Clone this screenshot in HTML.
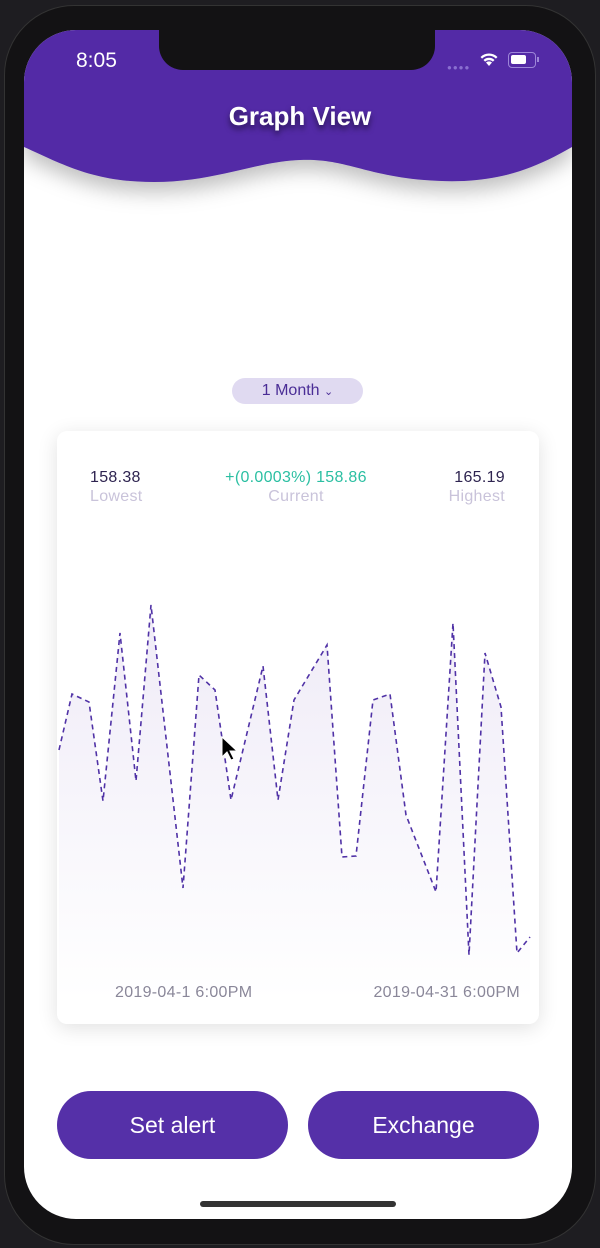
<!DOCTYPE html>
<html><head><meta charset="utf-8"><style>
*{margin:0;padding:0;box-sizing:border-box}
body{width:600px;height:1248px;background:#1e1d21;position:relative;overflow:hidden;font-family:"Liberation Sans",sans-serif}
.frame{position:absolute;left:4px;top:5px;width:592px;height:1240px;border-radius:70px;background:#131214;border:1px solid #333}
.screen{position:absolute;left:24px;top:30px;width:548px;height:1189px;border-radius:52px;background:#fff;overflow:hidden}
.notch{position:absolute;left:159px;top:28px;width:276px;height:42px;background:#131214;border-radius:0 0 24px 24px}
.t{position:absolute;white-space:nowrap}
.btn{position:absolute;top:1091px;height:68px;width:231px;border-radius:34px;background:#5530a8;color:#fff;font-size:23px;text-align:center;line-height:68px}
.v{font-size:16px;letter-spacing:0.3px}
</style></head><body>
<div class="frame"></div>
<div class="screen">
<svg width="548" height="240" style="position:absolute;left:0;top:0">
<defs><filter id="s" x="-10%" y="-10%" width="120%" height="150%"><feDropShadow dx="0" dy="10" stdDeviation="10" flood-color="#000" flood-opacity="0.25"/></filter></defs>
<path d="M0 0H548V117C500 145 460 155 400 150C340 145 320 128 276 130C230 132 190 152 130 152C70 152 40 135 0 117Z" fill="#522ca6" filter="url(#s)"/>
</svg>
</div>
<div class="notch"></div>
<div class="t" style="left:76px;top:49px;color:#fff;font-size:21px">8:05</div>
<div class="t" style="left:447px;top:63px;color:#8a6fd0;font-size:8px;letter-spacing:1px">●●●●</div>
<svg style="position:absolute;left:479px;top:51px" width="20" height="16" viewBox="0 0 20 16"><path d="M10 15L7 11.5a4.5 4.5 0 016 0zM4.5 9a8 8 0 0111 0l-1.6 1.6a5.8 5.8 0 00-7.8 0zM1.5 6a12 12 0 0117 0l-1.6 1.6a9.8 9.8 0 00-13.8 0z" fill="#fff"/></svg>
<div style="position:absolute;left:508px;top:52px;width:28px;height:16px;border:1.5px solid #9d86d8;border-radius:4px"><div style="margin:2px;width:15px;height:9px;background:#fff;border-radius:2px"></div></div>
<div style="position:absolute;left:537px;top:57px;width:2px;height:5px;background:#9d86d8"></div>
<div class="t" style="left:0;width:600px;text-align:center;top:101px;color:#fff;font-size:26px;font-weight:bold;text-shadow:0 4px 6px rgba(0,0,0,.5)">Graph View</div>
<div style="position:absolute;left:232px;top:378px;width:131px;height:26px;border-radius:13px;background:#e0daf1;color:#4a2d96;font-size:16px;text-align:center;line-height:26px">1 Month <span style="font-size:11px">&#8964;</span></div>
<div style="position:absolute;left:57px;top:431px;width:482px;height:593px;border-radius:10px;background:#fff;box-shadow:0 4px 20px rgba(0,0,0,.12)"></div>
<div class="t v" style="left:90px;top:469px;color:#2e2450">158.38</div>
<div class="t v" style="left:90px;top:488px;color:#c9c3da">Lowest</div>
<div class="t v" style="left:0;width:592px;text-align:center;top:469px;color:#2bbfa2">+(0.0003%) 158.86</div>
<div class="t v" style="left:0;width:592px;text-align:center;top:488px;color:#c9c3da">Current</div>
<div class="t v" style="right:95px;top:469px;color:#2e2450">165.19</div>
<div class="t v" style="right:95px;top:488px;color:#c9c3da">Highest</div>
<svg style="position:absolute;left:0;top:0" width="600" height="1248">
<defs><linearGradient id="g" x1="0" y1="0" x2="0" y2="1"><stop offset="0" stop-color="#efebf7"/><stop offset="1" stop-color="#fff"/></linearGradient></defs>
<path d="M59 750L72 694L89 702L103 801L120 633L136 781L151 605L183 888L199 675L215 690L231 800L263 666L278 800L294 700L327 645L342 857L356 856L373 700L390 694L406 815L436 892L453 623L469 955L485 653L501 707L517 953L530 937V1000H59Z" fill="url(#g)"/>
<path d="M59 750L72 694L89 702L103 801L120 633L136 781L151 605L183 888L199 675L215 690L231 800L263 666L278 800L294 700L327 645L342 857L356 856L373 700L390 694L406 815L436 892L453 623L469 955L485 653L501 707L517 953L530 937" fill="none" stroke="#5032a6" stroke-width="1.6" stroke-dasharray="5 4"/>
<path d="M222 737v20l5-5 4 8 3-1-4-8h7z" fill="#000" stroke="#fff" stroke-width="1"/>
</svg>
<div class="t v" style="left:115px;top:984px;color:#8a8799">2019-04-1 6:00PM</div>
<div class="t v" style="right:80px;top:984px;color:#8a8799">2019-04-31 6:00PM</div>
<div class="btn" style="left:57px">Set alert</div>
<div class="btn" style="left:308px">Exchange</div>
<div style="position:absolute;left:200px;top:1201px;width:196px;height:6px;border-radius:3px;background:#333"></div>
</body></html>
